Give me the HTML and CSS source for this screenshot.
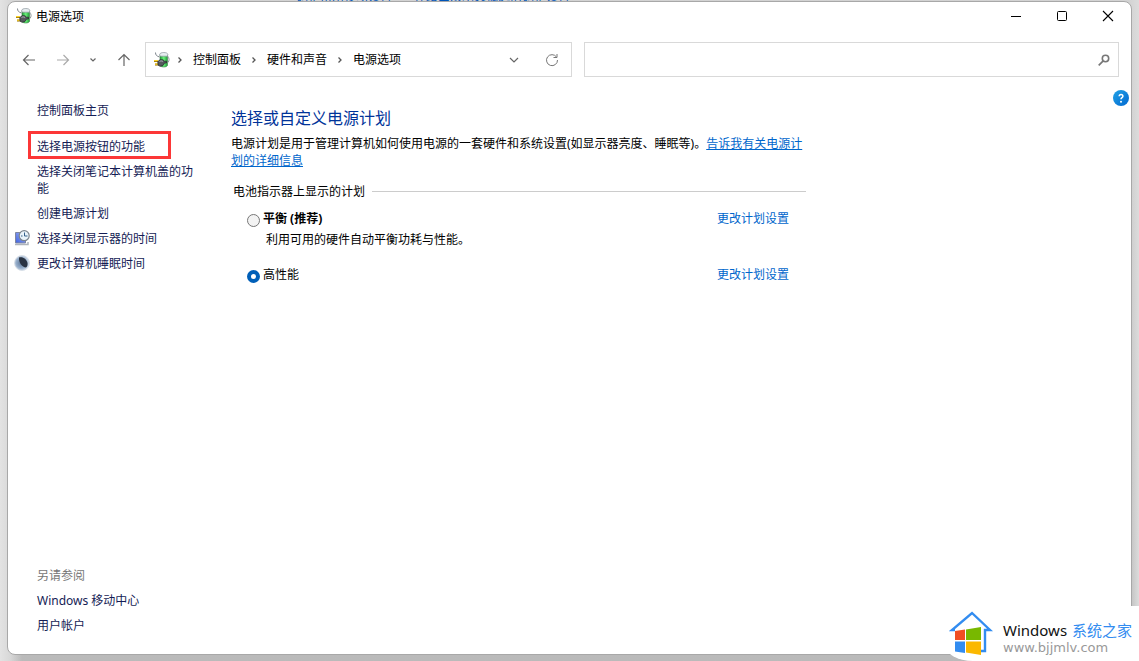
FILE: index.html
```html
<!DOCTYPE html>
<html lang="zh-CN">
<head>
<meta charset="utf-8">
<title>电源选项</title>
<link rel="stylesheet" href="styles.css">
</head>
<body>
<svg class="defs" width="0" height="0" aria-hidden="true">
  <defs>
    <linearGradient id="green" x1="0" x2="1"><stop offset="0" stop-color="#1c9a35"/><stop offset=".5" stop-color="#6df07c"/><stop offset="1" stop-color="#1d9c35"/></linearGradient>
    <linearGradient id="screen" x1="0" y1="1" x2="1" y2="0"><stop offset="0" stop-color="#3f62de"/><stop offset="1" stop-color="#a3b5f7"/></linearGradient>
    <radialGradient id="moon" cx=".45" cy=".5" r=".55"><stop offset="0" stop-color="#5e789a"/><stop offset=".6" stop-color="#93abc8"/><stop offset="1" stop-color="#dce5ef"/></radialGradient>
    <linearGradient id="help" x1="0" y1="0" x2="1" y2="1"><stop offset="0" stop-color="#22a3e6"/><stop offset="1" stop-color="#0067d0"/></linearGradient>
    <symbol id="power" viewBox="0 0 16 16">
      <path d="M1.500.5c0 2.500 1 3.500 4 4.500" fill="none" stroke="#7d848c"/>
      <path d="M6 3v10.500c1.500 2 6 2 7.500 0V3z" fill="url(#green)" stroke="#3c7a48" stroke-width=".6"/>
      <path d="M5.500 3C5.500 1 8 .5 9.800.5S14 1 14 3l-1 1.200H6.500z" fill="#e6edef" stroke="#8d979d" stroke-width=".7"/>
      <path d="M13.500 4c2 2 2 4.500.5 6.500" fill="none" stroke="#8f9799"/>
      <path d="M0 9h4M1 12.500h4" stroke="#8b6a07" stroke-width="2"/>
      <path d="M0 8.600h4M1 12.100h4" stroke="#ffd42a" stroke-width="1.100"/>
      <path d="M3.800 9.500 6 7.800h3l1.500 1.400h2v1.800h-2L9 13.500l-3 .8-2-1.300z" fill="#55585d" stroke="#232528" stroke-width=".7"/>
      <path d="M5.500 9.500 7 8.800l2 .6" fill="none" stroke="#a5aab0"/>
    </symbol>
  </defs>
</svg>
<div class="behind" aria-hidden="true"><span>调整常用移动设置</span><span>在给出演示文稿之前调整设置</span></div>
<div class="window">
  <header class="titlebar">
    <svg class="icon16"><use href="#power"/></svg>
    <h1 class="title">电源选项</h1>
    <button class="caption" aria-label="最小化"><svg width="12" height="12"><path d="M1 6.500h10" stroke="#000"/></svg></button>
    <button class="caption" aria-label="最大化"><svg width="12" height="12"><rect x="1.500" y="1.500" width="9" height="9" rx="1" fill="none" stroke="#000"/></svg></button>
    <button class="caption" aria-label="关闭"><svg width="12" height="12"><path d="m1 1 10 10M11 1 1 11" stroke="#000" stroke-width="1.100"/></svg></button>
  </header>
  <nav class="toolbar" aria-label="导航">
    <div class="history">
      <button aria-label="后退"><svg width="14" height="14"><path d="M13 7H1.500M6.500 2l-5 5 5 5" class="line"/></svg></button>
      <button aria-label="前进"><svg width="14" height="14"><path d="M1 7h11.500M7.500 2l5 5-5 5" class="line pale"/></svg></button>
      <button aria-label="最近位置"><svg width="8" height="14"><path d="m1.500 5.500 2.500 2.500 2.500-2.500" class="line"/></svg></button>
      <button aria-label="上移"><svg width="14" height="14"><path d="M7 13V1.500M1.500 7 7 1.500 12.500 7" class="line"/></svg></button>
    </div>
    <div class="address">
      <svg class="icon16"><use href="#power"/></svg>
      <ol class="crumbs">
        <li><svg class="sep" width="6" height="10"><path d="m1.500 2.500 2.500 2.500-2.500 2.500"/></svg><a href="#">控制面板</a></li>
        <li><svg class="sep" width="6" height="10"><path d="m1.500 2.500 2.500 2.500-2.500 2.500"/></svg><a href="#">硬件和声音</a></li>
        <li><svg class="sep" width="6" height="10"><path d="m1.500 2.500 2.500 2.500-2.500 2.500"/></svg><a href="#">电源选项</a></li>
      </ol>
      <button class="drop" aria-label="以前的位置"><svg width="10" height="10"><path d="m1 3 4 4 4-4" class="line"/></svg></button>
      <button class="refresh" aria-label="刷新"><svg width="14" height="14"><path d="M11.500 4A5.500 5.500 0 1 0 12.500 7M12 1v3.500H8.500" class="line thin"/></svg></button>
    </div>
    <div class="search">
      <input type="text" aria-label="搜索">
      <button aria-label="开始搜索"><svg width="12" height="12"><circle cx="7.500" cy="4.500" r="3.200" fill="none" stroke="#777" stroke-width="1.600"/><path d="M5.200 6.800.7 11.300" stroke="#777" stroke-width="1.700"/></svg></button>
    </div>
  </nav>
  <div class="body">
    <aside class="side">
      <ul class="tasks">
        <li><a href="#">控制面板主页</a></li>
        <li class="marked"><a href="#">选择电源按钮的功能</a></li>
        <li><a href="#">选择关闭笔记本计算机盖的功能</a></li>
        <li><a href="#">创建电源计划</a></li>
        <li class="with-icon"><svg class="icon16" viewBox="0 0 16 16"><path d="M1.500 2.500h10v10.500h-10z" fill="url(#screen)" stroke="#7f86a0"/><path d="M1 14.500h13V12" fill="none" stroke="#aeb4bb" stroke-width="1.500"/><circle cx="10.200" cy="5.700" r="5" fill="#eaf4fb" stroke="#7b858f" stroke-width="1.200"/><path d="M10.500 2.500v3.500h3M7 6h1.500" fill="none" stroke="#35608a"/></svg><a href="#">选择关闭显示器的时间</a></li>
        <li class="with-icon"><svg class="icon16" viewBox="0 0 16 16"><circle cx="8" cy="8" r="7.500" fill="url(#moon)" stroke="#d3dbe4" stroke-width=".8"/><path d="M5 2.500c4-1 7.500 1.500 8.500 5.500.3 2-.3 3.500-1.500 4.500C8 12 4.500 7.500 5 2.500z" fill="#2a3342"/></svg><a href="#">更改计算机睡眠时间</a></li>
      </ul>
      <ul class="tasks">
        <li class="muted">另请参阅</li>
        <li><a href="#">Windows 移动中心</a></li>
        <li><a href="#">用户帐户</a></li>
      </ul>
    </aside>
    <main class="main">
      <h2>选择或自定义电源计划</h2>
      <p class="intro">电源计划是用于管理计算机如何使用电源的一套硬件和系统设置(如显示器亮度、睡眠等)。<a href="#">告诉我有关电源计划的详细信息</a></p>
      <fieldset class="plans">
        <legend><span>电池指示器上显示的计划</span></legend>
        <div class="plan">
          <input type="radio" name="plan" id="balanced">
          <label for="balanced" class="strong">平衡 (推荐)</label>
          <a href="#">更改计划设置</a>
        </div>
        <p class="note">利用可用的硬件自动平衡功耗与性能。</p>
        <div class="plan">
          <input type="radio" name="plan" id="performance" checked>
          <label for="performance">高性能</label>
          <a href="#">更改计划设置</a>
        </div>
      </fieldset>
    </main>
    <button class="help" aria-label="帮助"><svg width="16" height="16"><circle cx="8" cy="8" r="8" fill="url(#help)"/><path d="M6.200 6.200c0-2.400 3.700-2.400 3.700 0 0 1.400-1.900 1.500-1.900 3" fill="none" stroke="#fff" stroke-width="1.500"/><circle cx="8" cy="11.700" r="1" fill="#fff"/></svg></button>
  </div>
</div>
<div class="watermark">
  <svg width="46" height="46" viewBox="0 0 46 46"><path d="M6 20H3L23 3l18 17h-5v21h-6" fill="none" stroke="#328cf0" stroke-width="2.400"/><path d="m6 21 10-1.500V30H6z" fill="#f04e23"/><path d="M17 19.500 32 17v13H17z" fill="#78b800"/><path d="M6 31.500h10V43L6 41.500z" fill="#328cf0"/><path d="M17 31.500h15V45l-15-2.500z" fill="#fbb800"/></svg>
  <div class="brand"><div class="name">Windows <span>系统之家</span></div><div class="url">www.bjjmlv.com</div></div>
</div>
</body>
</html>
```
FILE: styles.css
```css
* { box-sizing: border-box; }

body {
  position: relative;
  display: flex;
  min-height: 100vh;
  margin: 0;
  padding: 1px 7px 6px;
  overflow: hidden;
  background: linear-gradient(90deg, #e3e3e3, #d8d8d8 10px, transparent 22px, transparent calc(100% - 10px), #dcdcdc), linear-gradient(#d3d3d3, #bababa);
  color: #000;
  font: 12px/17px "Noto Sans", "Noto Sans CJK SC", sans-serif;
}

h1, h2, p, ul, ol { margin: 0; padding: 0; }
ul, ol { list-style: none; }
a { color: inherit; text-decoration: none; }
button { display: flex; align-items: center; justify-content: center; padding: 0; border: 0; background: none; }
svg { display: block; flex: none; }
.defs { position: absolute; }
.icon16 { width: 16px; height: 16px; }
.line { fill: none; stroke: #666; stroke-width: 1.2; }
.thin { stroke: #777; stroke-width: 1; }
.pale { stroke: #aaa; }

.behind {
  position: absolute;
  top: -12px;
  left: 296px;
  display: flex;
  gap: 22px;
  color: #0054b8;
}

.window {
  position: relative;
  flex: 1;
  display: flex;
  flex-direction: column;
  border: 1px solid #a8a8a8;
  border-radius: 8px;
  background: #fff;
}

.titlebar { display: flex; align-items: center; height: 28px; padding-left: 8px; }
.title { flex: 1; padding-left: 4px; font-size: 12px; font-weight: 400; }
.caption { width: 46px; height: 28px; }

.toolbar { display: flex; gap: 12px; height: 35px; margin: 12px 12px 0 14px; }
.history { display: flex; justify-content: space-between; width: 111px; padding-right: 2px; }
.address, .search { display: flex; align-items: center; min-width: 0; border: 1px solid #d9d9d9; }
.address { flex: 426 0 0; width: 0; padding: 0 12px 0 8px; }
.search { flex: 560 0 0; }
.crumbs { display: flex; gap: 10px; padding-left: 7px; white-space: nowrap; }
.crumbs li { display: flex; align-items: center; gap: 10px; }
.sep path { fill: none; stroke: #555; stroke-width: 1.3; }
.drop { margin-left: auto; margin-right: 26px; }
.search input { flex: 1; min-width: 0; height: 33px; border: 0; outline: 0; background: none; }
.search button { margin-right: 8px; }

.body { flex: 1; display: flex; align-items: stretch; padding: 13px 2px 20px 6px; }

.side {
  display: flex;
  flex-direction: column;
  justify-content: space-between;
  width: 183px;
  padding-top: 12px;
  color: #151c55;
}
.tasks { display: flex; flex-direction: column; gap: 8px; padding-left: 23px; }
.marked { width: 143px; margin: 4px 0 -4px -9px; padding: 4px 6px 1px; border: 3px solid #fc3737; }
.with-icon { display: flex; gap: 7px; margin-left: -23px; }
.muted { color: #777; }

.main { width: 575px; margin-left: 34px; padding-top: 16px; }
h2 { color: #003399; font-size: 16px; font-weight: 400; line-height: 24px; }
.intro { margin-top: 5px; }
.intro a { text-decoration: underline; }
.main a { color: #0066cc; }
.plans { margin: 14px 0 0; padding: 0; border: 0; }
legend { display: flex; align-items: center; gap: 7px; width: 100%; padding: 0 0 0 2px; }
legend::after { content: ""; flex: 1; height: 1px; background: #ccc; }
.plan { display: flex; align-items: center; gap: 3px; margin-top: 10px; padding: 0 17px 0 16px; }
.plan label { flex: 1; }
.plan input {
  appearance: none;
  width: 13px;
  height: 13px;
  margin: 3px 0 0;
  border: 1px solid #777;
  border-radius: 50%;
  background: #f3f3f3;
}
.plan input:checked { border: 4px solid #005fb8; background: #fff; }
.strong { font-weight: 700; }
.note { margin: 4px 0 18px 35px; }
.help { align-self: flex-start; margin-left: auto; }

.watermark {
  position: absolute;
  right: 0;
  bottom: 0;
  display: flex;
  gap: 8px;
  width: 194px;
  height: 55px;
  padding: 4px 0 0 4px;
  border-bottom-left-radius: 28px 16px;
  background: #fff;
}
.brand { padding-top: 10px; white-space: nowrap; }
.name { display: flex; gap: 5px; color: #111; font-size: 15px; line-height: 20px; }
.name span { color: #328cf0; }
.url { color: #999; font: 13px/15px "DejaVu Sans", sans-serif; }
```
